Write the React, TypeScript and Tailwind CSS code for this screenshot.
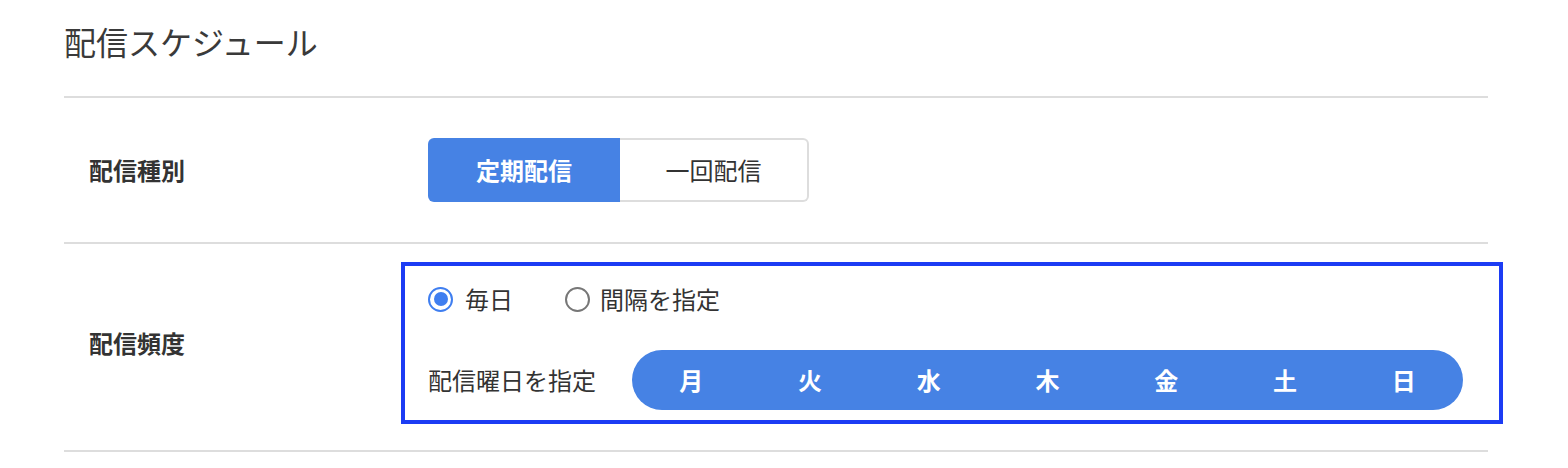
import React from "react";

const days = ["月", "火", "水", "木", "金", "土", "日"];

export default function App() {
  return (
    <div
      className="w-[1488px] pl-[64px] bg-white text-[#333]"
      style={{ fontFamily: '"Noto Sans CJK JP", "Noto Sans", sans-serif' }}
    >
      <div className="pt-[20px] pb-[34px] text-[32px] leading-[42px] text-[#3a3a3a] font-normal">
        配信スケジュール
      </div>

      <div className="border-t-2 border-[#dddddd] flex items-center py-[40px]">
        <div className="w-[364px] shrink-0 pl-[25px] text-[24px] font-bold leading-none">配信種別</div>
        <div className="flex h-[64px] shrink-0">
          <button className="w-[192px] h-[64px] bg-[#4682e4] text-white text-[24px] font-bold rounded-l-[6px] flex items-center justify-center">
            定期配信
          </button>
          <button className="w-[189px] h-[64px] border-2 border-l-0 border-[#dddddd] text-[#333] text-[24px] rounded-r-[6px] flex items-center justify-center">
            一回配信
          </button>
        </div>
      </div>

      <div className="border-t-2 border-[#dddddd] flex items-center pt-[18px] pb-[26px]">
        <div className="w-[337px] shrink-0 pl-[25px] text-[24px] font-bold leading-none">配信頻度</div>
        <div className="w-[1102px] shrink-0 h-[162px] border-4 border-[#1c3cf4] pl-[23px] pt-[20px]">
          <div className="flex items-center h-[26px]">
            <div className="flex items-center">
              <span className="w-[25px] h-[25px] rounded-full border-[2.5px] border-[#3f7ef0] flex items-center justify-center">
                <span className="w-[14px] h-[14px] rounded-full bg-[#3f7ef0]" />
              </span>
              <span className="ml-[12px] text-[24px] leading-none">毎日</span>
            </div>
            <div className="flex items-center ml-[52px]">
              <span className="w-[25px] h-[25px] rounded-full border-2 border-[#777]" />
              <span className="ml-[10px] text-[24px] leading-none">間隔を指定</span>
            </div>
          </div>
          <div className="flex items-center mt-[38px]">
            <span className="text-[24px] leading-none w-[204px] shrink-0">配信曜日を指定</span>
            <div className="w-[831px] shrink-0 h-[60px] rounded-full bg-[#4682e4] grid grid-cols-7 items-center">
              {days.map((d) => (
                <span key={d} className="text-center text-white text-[24px] font-bold leading-none">
                  {d}
                </span>
              ))}
            </div>
          </div>
        </div>
      </div>
      <div className="border-t-2 border-[#dddddd]" />
    </div>
  );
}
